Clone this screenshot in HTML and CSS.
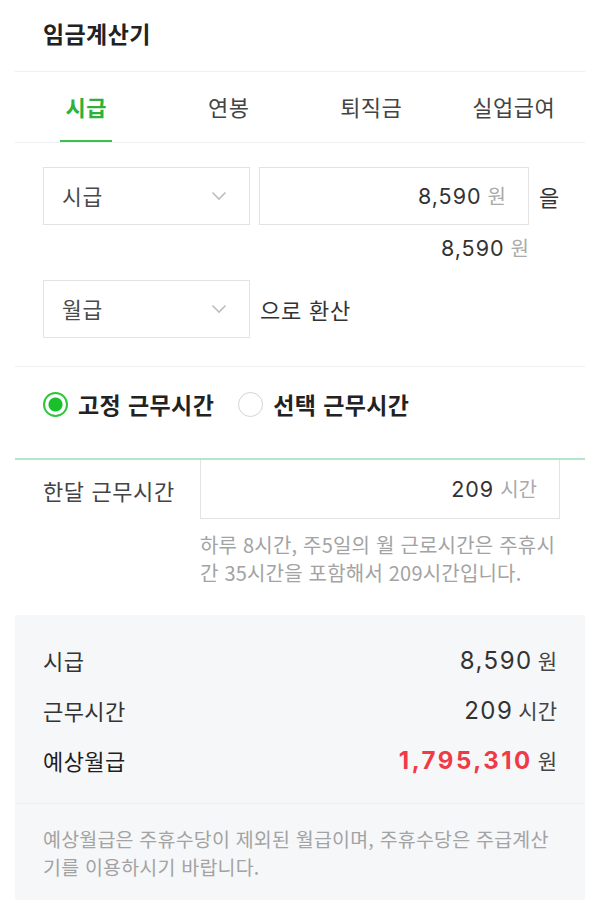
FILE: index.html
```html
<!DOCTYPE html>
<html lang="ko">
<head>
<meta charset="utf-8">
<title>임금계산기</title>
<link rel="stylesheet" href="styles.css">
</head>
<body>
<div class="page">
  <header class="header"><h1 class="title">임금계산기</h1></header>

  <nav class="tabs">
    <a class="tab active">시급</a>
    <a class="tab">연봉</a>
    <a class="tab">퇴직금</a>
    <a class="tab">실업급여</a>
  </nav>

  <section class="convert">
    <div class="row">
      <div class="select">
        <span>시급</span>
        <svg class="chev" width="16" height="10" viewBox="0 0 16 10"><path d="M1.5 1.5 L8 8 L14.5 1.5" fill="none" stroke="#bdbdbd" stroke-width="1.6"/></svg>
      </div>
      <div class="input wide">
        <span class="num">8,590</span><span class="unit">원</span>
      </div>
      <span class="suffix">을</span>
    </div>
    <div class="echo"><span class="num">8,590</span><span class="unit">원</span></div>
    <div class="row row2">
      <div class="select">
        <span>월급</span>
        <svg class="chev" width="16" height="10" viewBox="0 0 16 10"><path d="M1.5 1.5 L8 8 L14.5 1.5" fill="none" stroke="#bdbdbd" stroke-width="1.6"/></svg>
      </div>
      <span class="suffix">으로 환산</span>
    </div>
  </section>

  <section class="radios">
    <label class="radio on"><span class="dot"></span>고정 근무시간</label>
    <label class="radio"><span class="dot"></span>선택 근무시간</label>
  </section>

  <section class="hours">
    <div class="hours-row">
      <span class="hours-label">한달 근무시간</span>
      <div class="input hours-input"><span class="num">209</span><span class="unit">시간</span></div>
    </div>
    <p class="help">하루 8시간, 주5일의 월 근로시간은 주휴시간 35시간을 포함해서 209시간입니다.</p>
  </section>

  <section class="result">
    <div class="rows">
      <div class="res-row"><span class="res-label">시급</span><span class="res-val"><span class="num">8,590</span><span class="res-unit">원</span></span></div>
      <div class="res-row"><span class="res-label">근무시간</span><span class="res-val"><span class="num">209</span><span class="res-unit">시간</span></span></div>
      <div class="res-row"><span class="res-label strong">예상월급</span><span class="res-val"><span class="num red">1,795,310</span><span class="res-unit">원</span></span></div>
    </div>
    <p class="note">예상월급은 주휴수당이 제외된 월급이며, 주휴수당은 주급계산기를 이용하시기 바랍니다.</p>
  </section>
</div>
</body>
</html>
```
FILE: styles.css
```css
* { box-sizing: border-box; }
html, body { margin: 0; padding: 0; background: #fff; }
body {
  font-family: "Noto Sans CJK KR", "Noto Sans", sans-serif;
  color: #333;
  width: 600px;
}
.page { margin: 0 15px; }

.header {
  height: 72px;
  display: flex;
  align-items: center;
  padding: 0 0 5px 28px;
  border-bottom: 1px solid #eef0f3;
}
.title { margin: 0; font-size: 23px; line-height: 30px; font-weight: 700; color: #222; letter-spacing: 0.4px; }

.tabs {
  display: grid;
  grid-template-columns: repeat(4, 1fr);
  height: 71px;
  border-bottom: 1px solid #eef0f3;
}
.tab {
  display: flex;
  align-items: center;
  justify-content: center;
  font-size: 22px;
  line-height: 30px;
  padding-bottom: 2px;
  color: #444;
  position: relative;
  letter-spacing: 0.5px;
}
.tab.active { color: #2cb13c; font-weight: 700; }
.tab.active::after {
  content: "";
  position: absolute;
  left: 50%;
  bottom: 0;
  width: 52px;
  margin-left: -26px;
  height: 2px;
  background: #3cc04c;
}

.convert { padding: 24px 28px 28px; border-bottom: 1px solid #eef0f3; }
.row { display: flex; align-items: center; gap: 9px; }
.row2 { margin-top: 18px; }
.select {
  flex: none;
  width: 207px;
  height: 58px;
  border: 1px solid #e3e3e3;
  display: flex;
  align-items: center;
  justify-content: space-between;
  padding: 0 22px 0 18px;
  font-size: 21.5px;
  line-height: 28px;
  letter-spacing: 0.6px;
  color: #4a4a4a;
}
.chev { display: block; }
.input {
  height: 58px;
  border: 1px solid #e3e3e3;
  display: flex;
  align-items: center;
  justify-content: flex-end;
  padding-right: 22px;
  line-height: 28px;
}
.input.wide { flex: none; width: 270px; }
.num {
  font-family: "Inter", "Liberation Sans", sans-serif;
  font-size: 21.5px;
  color: #333;
  letter-spacing: 1px;
}
.unit { font-size: 20px; color: #aaa; margin-left: 6px; }
.suffix { flex: none; font-size: 22px; line-height: 28px; color: #333; margin-left: 1px; letter-spacing: 0.8px; }
.echo {
  width: 486px;
  display: flex;
  justify-content: flex-end;
  align-items: center;
  margin-top: 9px;
  height: 28px;
  line-height: 28px;
}

.radios {
  display: flex;
  align-items: center;
  padding: 23px 28px 40px;
  border-bottom: 2px solid #b4e6cc;
}
.radio {
  display: flex;
  align-items: center;
  font-size: 23px;
  line-height: 28px;
  height: 28px;
  font-weight: 700;
  color: #222;
  margin-right: 24px;
  letter-spacing: 0.4px;
}
.dot {
  flex: none;
  width: 25px;
  height: 25px;
  border-radius: 50%;
  border: 1px solid #d4d4d4;
  margin-right: 10px;
  background: #fff;
}
.radio.on .dot {
  border: 2px solid #2ec43c;
  background: radial-gradient(circle, #19c02c 0 6.5px, #fff 7.5px);
}

.hours { padding: 0 25px 28px 28px; }
.hours-row { display: flex; align-items: center; }
.hours-label { flex: none; width: 157px; font-size: 22px; line-height: 28px; color: #444; letter-spacing: 0.6px; }
.hours-input { flex: 1; height: 59px; border-top: 0; }
.help {
  margin: 12px 0 0 157px;
  font-size: 20px;
  line-height: 28px;
  color: #a3a3a3;
  letter-spacing: 0.2px;
}

.result { background: #f6f7f9; height: 285px; }
.rows { padding: 20px 28px 18px; border-bottom: 1px solid #eceef1; }
.res-row { height: 50px; display: flex; align-items: center; justify-content: space-between; line-height: 30px; }
.res-label { font-size: 22px; color: #333; letter-spacing: 0.4px; }
.res-label.strong { color: #1e1e1e; }
.res-val { display: flex; align-items: baseline; }
.res-val .num { font-size: 24px; color: #333; letter-spacing: 1.5px; }
.res-val .num.red { color: #ef3b45; font-weight: 700; letter-spacing: 2.5px; }
.res-unit { font-size: 21px; color: #444; margin-left: 5px; }
.note {
  margin: 0;
  padding: 21px 28px 20px 28px;
  font-size: 19.5px;
  line-height: 28px;
  color: #a3a3a3;
  letter-spacing: 0.2px;
}
```
